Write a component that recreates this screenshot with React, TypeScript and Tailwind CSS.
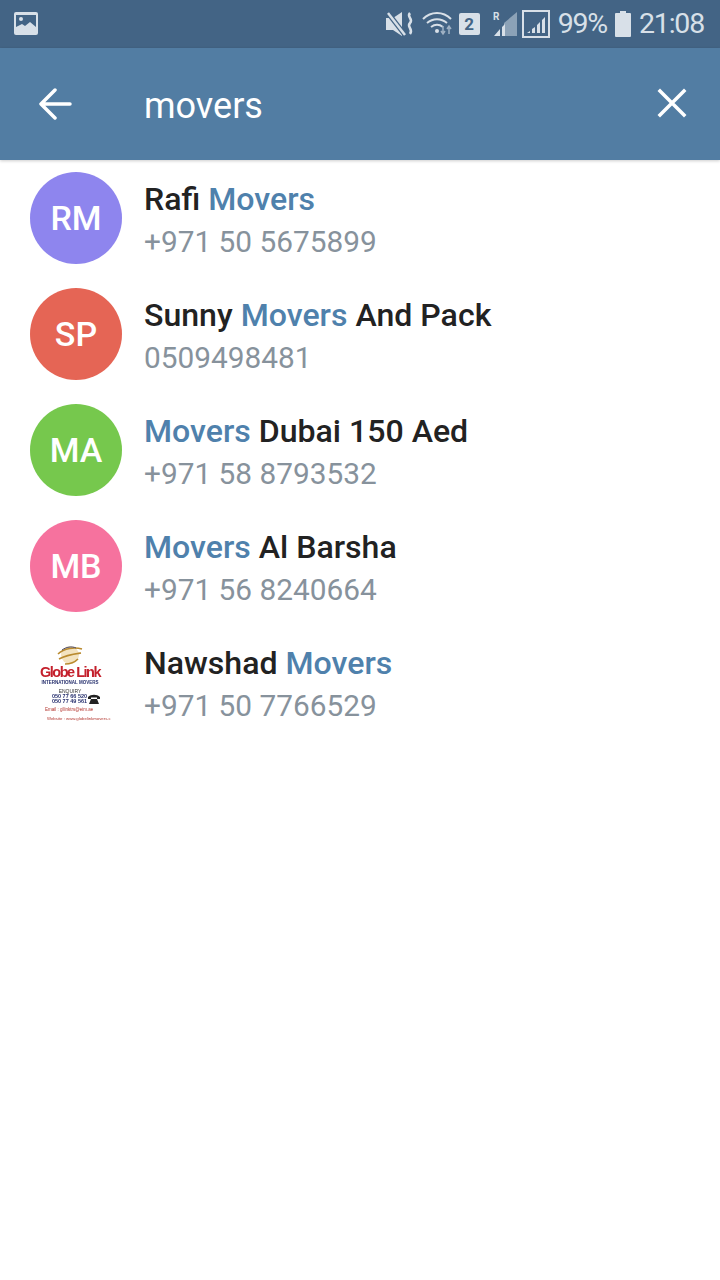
const contacts = [
  { id: 1, initials: "RM", color: "bg-[#8e85ee]", phone: "+971 50 5675899", name: [["Rafi ", false], ["Movers", true]] },
  { id: 2, initials: "SP", color: "bg-[#e56555]", phone: "0509498481", name: [["Sunny ", false], ["Movers", true], [" And Pack", false]] },
  { id: 3, initials: "MA", color: "bg-[#76c84d]", phone: "+971 58 8793532", name: [["Movers", true], [" Dubai 150 Aed", false]] },
  { id: 4, initials: "MB", color: "bg-[#f6729e]", phone: "+971 56 8240664", name: [["Movers", true], [" Al Barsha", false]] },
];

const GlobeLogo = () => (
  <div className="w-[92px] h-[92px] shrink-0 flex flex-col items-center bg-white pt-[9px] pr-[12px] leading-none overflow-hidden font-['Liberation_Sans',sans-serif] blur-[0.4px]">
    <svg width="26" height="20" viewBox="0 0 26 20" fill="none">
      <ellipse cx="13" cy="10" rx="9" ry="9" fill="#f3e3c0" />
      <path d="M1 9c6-6 17-7 24-5M2 14c7-4 15-5 22-6M8 19c5 0 10-2 13-5" stroke="#b98a2e" strokeWidth="1.600" />
      <path d="M5 5c4-3 10-4 14-2" stroke="#4a4a6a" strokeWidth="1" />
    </svg>
    <div className="text-[14.500px] font-bold text-[#c4202c] tracking-[-1.500px] whitespace-nowrap">Globe Link</div>
    <div className="text-[4.500px] font-bold text-[#27306e] mt-[1px] whitespace-nowrap">INTERNATIONAL MOVERS</div>
    <div className="text-[5px] text-[#333] mt-[4px]">ENQUIRY</div>
    <div className="flex items-center gap-[1px] ml-[12px]">
      <div className="text-[5.500px] font-bold text-[#27306e] leading-[5px]">
        <div>050 77 66 520</div>
        <div>050 77 49 561</div>
      </div>
      <svg width="12" height="10" viewBox="0 0 12 10">
        <path d="M0 3c3-3 9-3 12 0v2H9V3.500H3V5H0zM3 5h6l2 5H1z" fill="#222" />
      </svg>
    </div>
    <div className="text-[4.500px] text-[#b3362f] mt-[4px] self-start ml-[15px] whitespace-nowrap">Email : gllinktrs@eim.ae</div>
    <div className="text-[4.300px] text-[#b3362f] mt-[4px] self-start ml-[17px] whitespace-nowrap">Website : www.globelinkmovers.c</div>
  </div>
);

const Row = ({ avatar, name, phone }: { avatar: React.ReactNode; name: React.ReactNode; phone: string }) => (
  <div className="h-[116px] flex items-center pl-[30px]">
    {avatar}
    <div className="ml-[22px] mt-[1px]">
      <div className="text-[32.100px] leading-[40px] font-medium text-[#222222] whitespace-nowrap">{name}</div>
      <div className="text-[29.800px] leading-[35px] mt-[5px] text-[#87929c]">{phone}</div>
    </div>
  </div>
);

export default function App() {
  return (
    <div className="w-[720px] h-[1280px] bg-white font-['Roboto',sans-serif] overflow-hidden">
      <div className="h-[48px] bg-[#436485] flex items-center pl-[14px] pr-[16px] text-[#d8e0e8]">
        <svg width="24" height="24" viewBox="0 0 24 24">
          <rect width="24" height="23" rx="2" fill="#d8e0e8" />
          <rect x="2" y="3" width="20" height="13" fill="#436485" />
          <circle cx="7" cy="7" r="2" fill="#d8e0e8" />
          <path d="M2 19v-4l6-3 3 2 5-4 6 5v4z" fill="#d8e0e8" />
        </svg>
        <div className="flex-1" />
        <svg width="28" height="26" viewBox="0 0 28 26" className="mr-[8px]">
          <path d="M0 7h7l9-6v24l-9-6H0z" fill="#d8e0e8" />
          <path d="M2 2l17 22" stroke="#436485" strokeWidth="5" />
          <path d="M2 2l17 22" stroke="#d8e0e8" strokeWidth="2.500" />
          <path d="M24 2c-4 4 4 6 0 10s4 6 0 11" stroke="#d8e0e8" strokeWidth="2.500" fill="none" />
        </svg>
        <svg width="32" height="28" viewBox="0 0 32 28" className="mr-[5px]">
          <path d="M1 9c8-8 20-8 28 0M5 13c6-5 14-5 20 0M9 17c4-3 8-3 12 0" stroke="#d8e0e8" strokeWidth="2" fill="none" />
          <circle cx="15" cy="21" r="2" fill="#d8e0e8" />
          <path d="M21 16v7M19 21l2 3 2-3" stroke="#9fb1c3" strokeWidth="1.500" fill="none" />
          <path d="M27 24v-7M25 19l2-3 2 3" stroke="#9fb1c3" strokeWidth="1.500" fill="none" />
        </svg>
        <div className="w-[21px] h-[22px] bg-[#d8e0e8] rounded-[2px] mr-[13px] flex items-center justify-center text-[#436485] text-[17px] font-bold leading-none">2</div>
        <svg width="24" height="26" viewBox="0 0 24 26" className="mr-[5px]">
          <path d="M24 1v24H11V12z" fill="#8ca2b7" />
          <path d="M1 25l6-7v7zM9 25v-9l3-3v12z" fill="#d8e0e8" />
          <text x="0" y="9" fontSize="10" fontWeight="700" fill="#d8e0e8">R</text>
        </svg>
        <div className="w-[28px] h-[28px] border-2 border-[#d8e0e8] mr-[8px]">
          <svg width="24" height="24" viewBox="0 0 24 24">
            <path d="M3 21l3-2v2zM8 21v-4l3-2v6zM13 21V13l3-3v11zM18 21V8l3-3v16z" fill="#d8e0e8" />
          </svg>
        </div>
        <span className="text-[28.500px] leading-none mr-[8px] tracking-[-1.200px]">99%</span>
        <svg width="16" height="26" viewBox="0 0 16 26" className="mr-[8px]">
          <path d="M5 0h6v2h4a1 1 0 0 1 1 1v22a1 1 0 0 1-1 1H1a1 1 0 0 1-1-1V3a1 1 0 0 1 1-1h4z" fill="#d8e0e8" />
        </svg>
        <span className="text-[28.500px] leading-none tracking-[-1.200px]">21:08</span>
      </div>

      <div className="h-[112px] bg-[#527da3] flex items-center pl-[39px] pr-[33px] shadow-[0_1px_3px_rgba(0,0,0,0.2)] relative">
        <svg width="33" height="32" viewBox="0 0 33 32" fill="none" stroke="white" strokeWidth="3.500" strokeLinecap="round" strokeLinejoin="round">
          <path d="M31 16H3M16 2L2 16l14 14" />
        </svg>
        <span className="ml-[72px] text-[36px] leading-none text-white flex-1 mt-[4px]">movers</span>
        <svg width="30" height="30" viewBox="0 0 30 30" stroke="white" strokeWidth="3.500" strokeLinecap="square" className="-mt-[2px]">
          <path d="M3 3l24 24M27 3L3 27" />
        </svg>
      </div>

      {contacts.map((c) => (
        <Row
          key={c.id}
          phone={c.phone}
          avatar={
            <div className={`${c.color} w-[92px] h-[92px] shrink-0 rounded-full flex items-center justify-center text-white text-[34px] font-medium`}>
              {c.initials}
            </div>
          }
          name={c.name.map(([text, hit], i) => (
            <span key={i} className={hit ? "text-[#4f81ac]" : undefined}>{text as string}</span>
          ))}
        />
      ))}
      <Row
        phone="+971 50 7766529"
        avatar={<GlobeLogo />}
        name={<>Nawshad <span className="text-[#4f81ac]">Movers</span></>}
      />
    </div>
  );
}
